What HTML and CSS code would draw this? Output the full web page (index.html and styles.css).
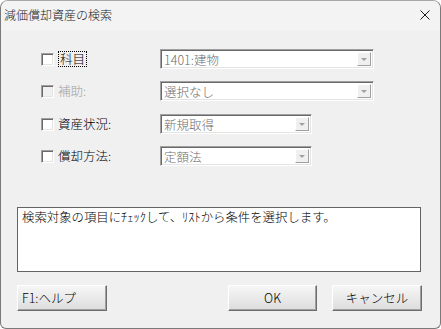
FILE: index.html
```html
<!DOCTYPE html>
<html lang="ja">
<head>
<meta charset="utf-8">
<link rel="stylesheet" href="styles.css">
</head>
<body>
<div class="window">
  <div class="titlebar">
    <span class="title">減価償却資産の検索</span>
    <svg class="close" width="10" height="10" viewBox="0 0 10 10"><path d="M0.5 0.5L9.5 9.5M9.5 0.5L0.5 9.5" stroke="#1a1a1a" stroke-width="1" fill="none"/></svg>
  </div>
  <div class="client">
    <div class="fields">
      <span class="check"></span>
      <span class="label"><span class="focus">科目</span></span>
      <div class="combo long"><span class="value">1401:建物</span><span class="drop"></span></div>

      <span class="check disabled"></span>
      <span class="label dim">補助:</span>
      <div class="combo long"><span class="value">選択なし</span><span class="drop"></span></div>

      <span class="check"></span>
      <span class="label">資産状況:</span>
      <div class="combo short"><span class="value">新規取得</span><span class="drop"></span></div>

      <span class="check"></span>
      <span class="label">償却方法:</span>
      <div class="combo short"><span class="value">定額法</span><span class="drop"></span></div>
    </div>
    <div class="note">検索対象の項目にﾁｪｯｸして、ﾘｽﾄから条件を選択します。</div>
    <div class="buttons">
      <button class="btn help">F1:ヘルプ</button>
      <div class="spacer"></div>
      <button class="btn ok">OK</button>
      <button class="btn cancel">キャンセル</button>
    </div>
  </div>
</div>
</body>
</html>
```
FILE: styles.css
```css
html, body {
  margin: 0;
  padding: 0;
  background: #ffffff;
}
body {
  font-family: "Noto Sans CJK JP", "Noto Sans", sans-serif;
  font-size: 12px;
  font-weight: 300;
  color: #000;
}
.window {
  width: 441px;
  height: 329px;
  box-sizing: border-box;
  border: 1px solid #7a7a7a;
  border-top-color: #a8a8a8;
  border-radius: 8px 8px 6px 6px;
  background: #f0f0f0;
  display: flex;
  flex-direction: column;
  overflow: hidden;
}
.titlebar {
  height: 30px;
  flex: none;
  display: flex;
  align-items: center;
  justify-content: space-between;
  padding: 0 10px 0 3px;
  background: #f3f3f3;
}
.title {
  font-size: 12px;
  line-height: 14px;
  color: #1a1a1a;
  margin-top: -3px;
}
.close {
  display: block;
  margin-top: -3px;
}
.client {
  flex: 1;
  display: flex;
  flex-direction: column;
  padding: 18px 18px 0 16px;
}
.fields {
  display: grid;
  grid-template-columns: 40px 103px auto;
  grid-template-rows: 20px 20px 20px 20px;
  row-gap: 12px;
  align-items: center;
}
.fields > :nth-child(n+7) {
  position: relative;
  top: 1px;
}
.check {
  width: 13px;
  height: 13px;
  box-sizing: border-box;
  justify-self: end;
  margin-right: 3px;
  background: #fff;
  border: 1px solid;
  border-color: #a0a0a0 #ffffff #ffffff #a0a0a0;
  box-shadow: inset 1px 1px 0 #696969, inset -1px -1px 0 #e3e3e3;
}
.check.disabled {
  background: #f0f0f0;
}
.label {
  line-height: 14px;
  white-space: nowrap;
  margin-left: 1px;
  font-size: 12.5px;
}
.label.dim {
  color: #a0a0a0;
}
.focus {
  display: inline-block;
  border: 1px dotted #000;
  padding: 0 1px;
  line-height: 14px;
}
.combo {
  height: 20px;
  box-sizing: border-box;
  background: #fff;
  border: 1px solid;
  border-color: #a0a0a0 #ffffff #ffffff #a0a0a0;
  box-shadow: inset 1px 1px 0 #696969, inset -1px -1px 0 #e3e3e3;
  display: flex;
  align-items: stretch;
  padding: 2px 2px 2px 2px;
}
.combo.long { width: 214px; }
.combo.short { width: 152px; }
.value {
  flex: 1;
  line-height: 16px;
  color: #6d6d6d;
  padding-left: 1px;
  white-space: nowrap;
  font-size: 12.5px;
}
.drop {
  width: 14px;
  box-sizing: border-box;
  background: #f0f0f0;
  border: 1px solid;
  border-color: #ffffff #a0a0a0 #a0a0a0 #ffffff;
  position: relative;
}
.drop::after {
  content: "";
  position: absolute;
  left: 3px;
  top: 5px;
  border-left: 3px solid transparent;
  border-right: 3px solid transparent;
  border-top: 3px solid #a0a0a0;
}
.note {
  margin-top: 42px;
  height: 65px;
  width: 404px;
  box-sizing: border-box;
  background: #fff;
  border: 1px solid #646464;
  padding: 2px 4px;
  line-height: 15px;
  white-space: nowrap;
  font-size: 12.4px;
}
.buttons {
  margin-top: 13px;
  display: flex;
  align-items: center;
  gap: 15px;
}
.spacer { flex: 1; }
.btn {
  height: 26px;
  box-sizing: border-box;
  font-family: "Noto Sans CJK JP", "Noto Sans", sans-serif;
  font-size: 12.5px;
  font-weight: 300;
  line-height: 14px;
  color: #000;
  background: linear-gradient(#f6f6f6, #dddddd);
  border: 1px solid;
  border-color: #ffffff #6d6d6d #6d6d6d #ffffff;
  box-shadow: inset -1px -1px 0 #a0a0a0;
  padding: 0;
}
.btn.help {
  width: 90px;
  text-align: left;
  padding-left: 4px;
}
.btn.ok { width: 89px; }
.btn.cancel { width: 90px; }
```
